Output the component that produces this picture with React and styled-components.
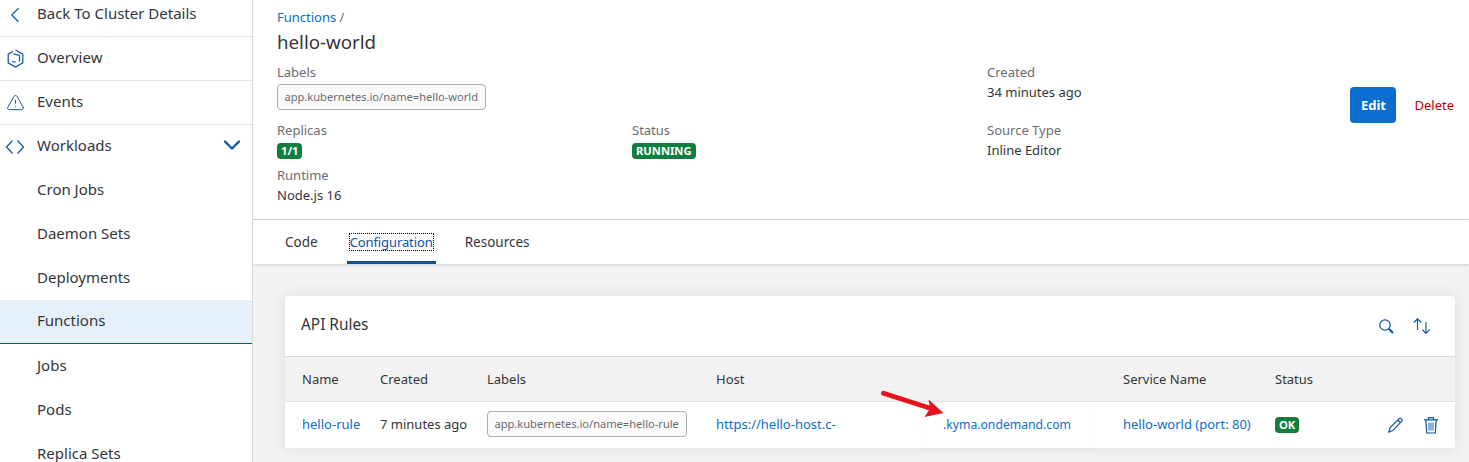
import styled, { createGlobalStyle } from 'styled-components';
import { ChevronLeft, TriangleAlert, ChevronDown } from 'lucide-react';

const GlobalStyle = createGlobalStyle`
  html, body {
    margin: 0;
    padding: 0;
    height: 462px;
    overflow: hidden;
  }
  body {
    font-family: "Noto Sans", "Liberation Sans", sans-serif;
    color: #32363a;
  }
`;

const Page = styled.div`
  display: flex;
  width: 1469px;
  height: 462px;
  overflow: hidden;
  background: #f3f3f3;
`;

const Sidebar = styled.nav`
  width: 252px;
  flex-shrink: 0;
  background: #fff;
  border-right: 1px solid #d9d9d9;
  overflow: hidden;
`;
const NavRow = styled.div`
  display: flex;
  align-items: center;
  height: ${(p) => p.$h || 44}px;
  box-sizing: border-box;
  padding: 0 0 ${(p) => p.$pb ?? 4}px 37px;
  position: relative;
  font-size: 15px;
  background: #fff;
  border-bottom: 1px solid ${(p) => (p.$divider ? '#e5e5e5' : 'transparent')};
`;
const ActiveNavRow = styled(NavRow)`
  margin: -1px 0 1px;
  background: #e5f0fa;
  border-bottom-color: #0854a0;
`;
const NavIcon = styled.span`
  position: absolute;
  left: 2px;
  width: 26px;
  height: 26px;
  margin-top: 4px;
  display: flex;
  align-items: center;
  justify-content: center;
  color: #0854a0;
`;
const NavChevron = styled.span`
  position: absolute;
  right: 6px;
  display: flex;
  color: #0854a0;
`;

const Main = styled.main`
  flex: 1;
  min-width: 0;
`;
const Header = styled.header`
  display: flex;
  height: 220px;
  box-sizing: border-box;
  padding: 9px 15px 0 24px;
  background: #fff;
  border-bottom: 1px solid #d4d4d4;
`;
const HeaderBody = styled.div`
  flex: 1;
`;
const Crumb = styled.div`
  font-size: 13px;
  line-height: 17px;
  color: #6a6d70;
`;
const Link = styled.a`
  color: #0a6ed1;
  font-size: 13px;
  white-space: nowrap;
`;
const Title = styled.h1`
  margin: 3px 0 0;
  font-size: 18.7px;
  font-weight: 400;
  line-height: 26px;
`;
const MetaGrid = styled.div`
  display: grid;
  grid-template-columns: 355px 355px 355px;
  margin-top: 7px;
`;
const Field = styled.div`
  grid-column: span ${(p) => p.$span || 1};
  min-height: ${(p) => p.$min || 0}px;
`;
const Caption = styled.div`
  font-size: 13px;
  line-height: 20px;
  color: #6a6d70;
`;
const Value = styled.div`
  font-size: 13px;
  line-height: 20px;
`;
const Token = styled.div`
  width: fit-content;
  box-sizing: border-box;
  height: 26px;
  line-height: 23px;
  padding: 0 7px 0 6.5px;
  font-size: 11.1px;
  color: #6a6d70;
  background: #fafafa;
  border: 1px solid #a9adb1;
  border-radius: 4px;
  white-space: nowrap;
`;
const HeaderToken = styled(Token)`
  margin-top: 2px;
`;
const Badge = styled.div`
  width: fit-content;
  height: 16px;
  line-height: 16px;
  padding: 0 4px;
  font-size: 11.2px;
  font-weight: 700;
  color: #fff;
  background: #107e3e;
  border-radius: 4px;
`;
const FieldBadge = styled(Badge)`
  margin-top: 3px;
`;
const Actions = styled.div`
  display: flex;
  align-items: center;
  gap: 18px;
  height: 36px;
  margin-top: 78px;
`;
const EditButton = styled.button`
  width: 46px;
  height: 36px;
  border: none;
  border-radius: 4px;
  background: #0a6ed1;
  color: #fff;
  font: 700 13px "Noto Sans", sans-serif;
`;
const DeleteButton = styled.button`
  padding: 0;
  border: none;
  background: none;
  color: #bb0000;
  font: 400 13px "Noto Sans", sans-serif;
`;

const Tabs = styled.div`
  display: flex;
  height: 44px;
  padding-left: 29px;
  gap: 26px;
  background: #fff;
  box-shadow: 0 1px 3px rgba(0, 0, 0, 0.16);
`;
const Tab = styled.div`
  display: flex;
  align-items: center;
  justify-content: center;
  box-sizing: border-box;
  padding: 3px 3px 0;
  font-size: ${(p) => (p.$active ? 13 : 13.5)}px;
  letter-spacing: ${(p) => (p.$active ? '-0.1px' : '0')};
  color: ${(p) => (p.$active ? '#0854a0' : '#32363a')};
  border-bottom: 3px solid ${(p) => (p.$active ? '#0854a0' : 'transparent')};
  & > span {
    line-height: 16px;
    outline: ${(p) => (p.$active ? '1px dotted #000' : 'none')};
  }
`;

const Content = styled.section`
  padding: 32px 14px 0 32px;
`;
const Card = styled.div`
  position: relative;
  background: #fff;
  border-radius: 4px 4px 0 0;
  box-shadow: 0 0 16px rgba(0, 0, 0, 0.1);
`;
const CardHead = styled.div`
  display: flex;
  align-items: center;
  height: 60px;
  box-sizing: content-box;
  padding: 0 24px 0 16px;
  border-bottom: 1px solid #d9d9d9;
  font-size: 15.4px;
`;
const CardTitle = styled.span`
  margin-bottom: 4px;
`;
const CardTools = styled.div`
  display: flex;
  align-items: center;
  gap: 19px;
  margin-left: auto;
  color: #0854a0;
`;
const Row = styled.div`
  display: grid;
  grid-template-columns: 78px 107px 229px 407px 152px 1fr;
  align-items: center;
  height: 44px;
  padding-left: 17px;
  font-size: 13px;
  background: #f2f2f2;
  border-bottom: 1px solid #e0e0e0;
`;
const BodyRow = styled(Row)`
  height: 46px;
  box-sizing: border-box;
  padding-bottom: 2px;
  background: #fff;
  border-bottom: none;
`;
const StatusCell = styled.div`
  display: flex;
  align-items: center;
  justify-content: space-between;
  margin-top: 2px;
  padding-right: 17px;
  color: #0854a0;
`;
const RowTools = styled.div`
  display: flex;
  gap: 21px;
`;
const Patch = styled.div`
  position: absolute;
  left: 640px;
  top: 107px;
  width: 165px;
  height: 45px;
  display: flex;
  align-items: center;
  padding: 0 0 3px 18px;
  box-sizing: border-box;
  background: #fff;
  box-shadow: 0 0 3px rgba(0, 0, 0, 0.04);
`;
const PatchLink = styled(Link)`
  font-size: 12.2px;
`;
const Arrow = styled.svg`
  position: absolute;
  left: 595px;
  top: 94px;
`;

const OverviewIcon = () => (
  <svg width="17" height="19" viewBox="0 0 17 19" fill="none" stroke="currentColor" strokeWidth="1.2">
    <path d="M8.5 1 15.8 5.2v8.6L8.5 18 1.2 13.8V5.2L6 2.4" />
    <path d="M5.2 12.2c1.2 1.3 2.3 1 3.6.6M6.6 4.8l5.9 1.6v6" />
  </svg>
);

const CodeIcon = () => (
  <svg width="20" height="16" viewBox="0 0 20 16" fill="none" stroke="currentColor" strokeWidth="1.2">
    <path d="M7.5 1.5 1.5 8l6 6.5M12.5 1.5l6 6.5-6 6.5" />
  </svg>
);

const SearchIcon = () => (
  <svg width="15" height="15" viewBox="0 0 15 15" fill="none" stroke="currentColor">
    <circle cx="6" cy="6" r="5.2" strokeWidth="1.2" />
    <path d="M9.8 9.8 14 14" strokeWidth="2" />
  </svg>
);

const SortIcon = () => (
  <svg width="18" height="17" viewBox="0 0 18 17" fill="none" stroke="currentColor" strokeWidth="1.1">
    <path d="M4.5 12V.8M.8 4.5 4.5.8l3.7 3.7" />
    <path d="M13 4v11.4M9.3 11.7l3.7 3.7 3.7-3.7" />
  </svg>
);

const PencilIcon = () => (
  <svg width="15" height="16" viewBox="0 0 15 16" fill="none" stroke="currentColor" strokeWidth="1.2">
    <path d="M.8 15 2 10.8 11.2 1.6a1.3 1.3 0 0 1 1.8 0l.8.8a1.3 1.3 0 0 1 0 1.8L4.8 13.6z" />
    <path d="M9.8 3 12.4 5.6" />
  </svg>
);

const TrashIcon = () => (
  <svg width="14" height="17" viewBox="0 0 14 17" fill="none" stroke="currentColor">
    <path d="M4.5 2.2V.7h5v1.5M0 2.8h14" strokeWidth="1.2" />
    <path d="M1.8 3 2.7 16h8.6l.9-13" strokeWidth="1.2" />
    <path d="M5 5.5v8M7 5.5v8M9 5.5v8" strokeWidth="0.9" />
  </svg>
);

const navItems = ['Cron Jobs', 'Daemon Sets', 'Deployments'];

function App() {
  return (
    <Page>
      <GlobalStyle />
      <Sidebar>
        <NavRow $h={37} $pb={11} $divider>
          <NavIcon><ChevronLeft size={26} strokeWidth={1} /></NavIcon>
          Back To Cluster Details
        </NavRow>
        <NavRow $divider>
          <NavIcon><OverviewIcon /></NavIcon>
          Overview
        </NavRow>
        <NavRow $divider>
          <NavIcon><TriangleAlert size={19} strokeWidth={1.2} /></NavIcon>
          Events
        </NavRow>
        <NavRow>
          <NavIcon><CodeIcon /></NavIcon>
          Workloads
          <NavChevron><ChevronDown size={28} strokeWidth={1.9} /></NavChevron>
        </NavRow>
        {navItems.map((item) => (
          <NavRow key={item}>{item}</NavRow>
        ))}
        <ActiveNavRow>Functions</ActiveNavRow>
        <NavRow>Jobs</NavRow>
        <NavRow>Pods</NavRow>
        <NavRow>Replica Sets</NavRow>
      </Sidebar>
      <Main>
        <Header>
          <HeaderBody>
            <Crumb><Link>Functions</Link> /</Crumb>
            <Title>hello-world</Title>
            <MetaGrid>
              <Field $span={2} $min={58}>
                <Caption>Labels</Caption>
                <HeaderToken>app.kubernetes.io/name=hello-world</HeaderToken>
              </Field>
              <Field>
                <Caption>Created</Caption>
                <Value>34 minutes ago</Value>
              </Field>
              <Field $min={45}>
                <Caption>Replicas</Caption>
                <FieldBadge>1/1</FieldBadge>
              </Field>
              <Field>
                <Caption>Status</Caption>
                <FieldBadge>RUNNING</FieldBadge>
              </Field>
              <Field>
                <Caption>Source Type</Caption>
                <Value>Inline Editor</Value>
              </Field>
              <Field>
                <Caption>Runtime</Caption>
                <Value>Node.js 16</Value>
              </Field>
            </MetaGrid>
          </HeaderBody>
          <Actions>
            <EditButton>Edit</EditButton>
            <DeleteButton>Delete</DeleteButton>
          </Actions>
        </Header>
        <Tabs>
          <Tab><span>Code</span></Tab>
          <Tab $active><span>Configuration</span></Tab>
          <Tab><span>Resources</span></Tab>
        </Tabs>
        <Content>
          <Card>
            <CardHead>
              <CardTitle>API Rules</CardTitle>
              <CardTools>
                <SearchIcon />
                <SortIcon />
              </CardTools>
            </CardHead>
            <Row>
              <div>Name</div>
              <div>Created</div>
              <div>Labels</div>
              <div>Host</div>
              <div>Service Name</div>
              <div>Status</div>
            </Row>
            <BodyRow>
              <Link>hello-rule</Link>
              <div>7 minutes ago</div>
              <Token>app.kubernetes.io/name=hello-rule</Token>
              <Link>https://hello-host.c-</Link>
              <Link>hello-world (port: 80)</Link>
              <StatusCell>
                <Badge>OK</Badge>
                <RowTools>
                  <PencilIcon />
                  <TrashIcon />
                </RowTools>
              </StatusCell>
            </BodyRow>
            <Patch><PatchLink>.kyma.ondemand.com</PatchLink></Patch>
            <Arrow width="70" height="32" viewBox="0 0 70 32">
              <path d="M3.5 3.2 51 18.5" stroke="#e8101a" strokeWidth="4.8" strokeLinecap="round" fill="none" />
              <path d="M48.5 9.5 63.5 23 44.5 27 50 18.5z" fill="#e8101a" />
            </Arrow>
          </Card>
        </Content>
      </Main>
    </Page>
  );
}

export default App;
